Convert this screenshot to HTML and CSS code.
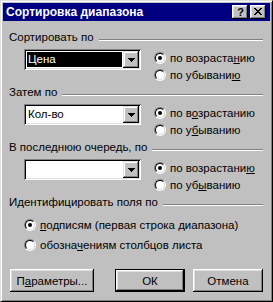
FILE: index.html
```html
<!DOCTYPE html>
<html lang="ru">
<head>
<meta charset="utf-8">
<title>Сортировка диапазона</title>
<link rel="stylesheet" href="styles.css">
</head>
<body>
<div class="window">
  <div class="titlebar">
    <span class="title">Сортировка диапазона</span>
    <span class="tbtn help">?</span>
    <span class="tbtn close"><svg width="8" height="7" viewBox="0 0 8 7"><path d="M0 0h2v1h1v1h2V1h1V0h2v1H7v1H6v1H5v1h1v1h1v1h1v1H6V6H5V5H3v1H2v1H0V6h1V5h1V4h1V3H2V2H1V1H0z" fill="#000"/></svg></span>
  </div>
  <div class="body">
    <div class="group">
      <div class="ghead"><span class="glabel">Сортировать по</span><span class="etch"></span></div>
      <div class="grow">
        <div class="combo">
          <div class="field"><span class="val sel">Цена</span></div>
          <div class="drop"><svg width="7" height="4" viewBox="0 0 7 4"><path d="M0 0h7v1H0zM1 1h5v1H1zM2 2h3v1H2zM3 3h1v1H3z" fill="#000"/></svg></div>
        </div>
        <div class="radios">
          <div class="radio"><span class="rb on"></span><span>по возраста<u>н</u>ию</span></div>
          <div class="radio"><span class="rb"></span><span>по убывани<u>ю</u></span></div>
        </div>
      </div>
    </div>
    <div class="group">
      <div class="ghead"><span class="glabel">Затем по</span><span class="etch"></span></div>
      <div class="grow">
        <div class="combo">
          <div class="field"><span class="val">Кол-во</span></div>
          <div class="drop"><svg width="7" height="4" viewBox="0 0 7 4"><path d="M0 0h7v1H0zM1 1h5v1H1zM2 2h3v1H2zM3 3h1v1H3z" fill="#000"/></svg></div>
        </div>
        <div class="radios">
          <div class="radio"><span class="rb on"></span><span>по в<u>о</u>зрастанию</span></div>
          <div class="radio"><span class="rb"></span><span>по у<u>б</u>ыванию</span></div>
        </div>
      </div>
    </div>
    <div class="group">
      <div class="ghead"><span class="glabel">В последнюю очередь, по</span><span class="etch"></span></div>
      <div class="grow">
        <div class="combo">
          <div class="field"><span class="val"></span></div>
          <div class="drop"><svg width="7" height="4" viewBox="0 0 7 4"><path d="M0 0h7v1H0zM1 1h5v1H1zM2 2h3v1H2zM3 3h1v1H3z" fill="#000"/></svg></div>
        </div>
        <div class="radios">
          <div class="radio"><span class="rb on"></span><span>по возрастани<u>ю</u></span></div>
          <div class="radio"><span class="rb"></span><span>по уб<u>ы</u>ванию</span></div>
        </div>
      </div>
    </div>
    <div class="ident">
      <div class="ghead"><span class="glabel">Идентифицировать поля по</span><span class="etch"></span></div>
      <div class="iradios">
        <div class="radio"><span class="rb on"></span><span><u>п</u>одписям (первая строка диапазона)</span></div>
        <div class="radio"><span class="rb"></span><span>обозна<u>ч</u>ениям столбцов листа</span></div>
      </div>
    </div>
    <div class="buttons">
      <div class="btn params">П<u>а</u>раметры...</div>
      <div class="btn ok">ОК</div>
      <div class="btn cancel">Отмена</div>
    </div>
  </div>
</div>
</body>
</html>
```
FILE: styles.css
```css
* { box-sizing: border-box; }
html, body { margin: 0; padding: 0; }
body {
  width: 273px;
  height: 302px;
  background: #c0c0c0;
  font-family: "Liberation Sans", Arial, sans-serif;
  font-size: 11.5px;
  color: #000;
  overflow: hidden;
}
.window {
  width: 273px;
  height: 302px;
  background: #c0c0c0;
  border: 1px solid;
  border-color: #dfdfdf #000 #000 #dfdfdf;
  box-shadow: inset 1px 1px #fff, inset -1px -1px #808080;
  padding: 2px;
  display: flex;
  flex-direction: column;
}
.titlebar {
  height: 18px;
  background: #000080;
  color: #fff;
  display: flex;
  align-items: center;
  padding: 0 4px 0 3px;
  flex: none;
}
.title {
  flex: 1;
  font-weight: bold;
  font-size: 12px;
  white-space: nowrap;
}
.tbtn {
  width: 16px;
  height: 14px;
  background: #c0c0c0;
  box-shadow: inset -1px -1px #000, inset 1px 1px #fff, inset -2px -2px #808080, inset 2px 2px #dfdfdf;
  color: #000;
  display: flex;
  align-items: center;
  justify-content: center;
  font-weight: bold;
  font-size: 11px;
  line-height: 14px;
  flex: none;
}
.help { margin-right: 2px; padding-left: 1px; }
.close svg { display: block; margin-top: -1px; }
.body {
  flex: 1;
  padding: 10px 7px 0 6px;
  display: flex;
  flex-direction: column;
}
.group { height: 55px; flex: none; }
.ghead {
  display: flex;
  height: 13px;
  line-height: 13px;
  white-space: nowrap;
}
.etch {
  flex: 1;
  margin-left: 5px;
  margin-top: 8px;
  height: 2px;
  border-top: 1px solid #808080;
  border-bottom: 1px solid #fff;
}
.grow {
  display: flex;
  margin-top: 5px;
  padding-left: 15px;
}
.combo {
  width: 117px;
  height: 21px;
  display: flex;
  background: #fff;
  padding: 2px;
  box-shadow: inset 1px 1px #808080, inset -1px -1px #fff, inset 2px 2px #000, inset -2px -2px #dfdfdf;
  flex: none;
}
.field {
  flex: 1;
  display: flex;
  padding: 1px;
}
.val {
  flex: 1;
  line-height: 15px;
  padding-left: 1px;
  white-space: nowrap;
}
.val.sel {
  background: #000;
  color: #fff;
}
.drop {
  width: 16px;
  height: 17px;
  background: #c0c0c0;
  box-shadow: inset -1px -1px #000, inset 1px 1px #dfdfdf, inset -2px -2px #808080, inset 2px 2px #fff;
  display: flex;
  align-items: center;
  justify-content: center;
  flex: none;
}
.drop svg { display: block; }
.radios {
  margin-left: 13px;
  display: flex;
  flex-direction: column;
}
.radio {
  display: flex;
  align-items: center;
  height: 17px;
  white-space: nowrap;
}
.rb {
  width: 12px;
  height: 12px;
  border-radius: 50%;
  border: 1px solid;
  border-color: #808080 #fff #fff #808080;
  margin-right: 4px;
  flex: none;
  position: relative;
}
.rb::before {
  content: "";
  position: absolute;
  inset: 0;
  border-radius: 50%;
  border: 1px solid;
  border-color: #000 #dfdfdf #dfdfdf #000;
  background: #fff;
}
.rb.on::after {
  content: "";
  position: absolute;
  left: 3px;
  top: 3px;
  width: 4px;
  height: 4px;
  border-radius: 50%;
  background: #000;
}
.ident { flex: none; }
.iradios {
  margin-top: 6px;
  padding-left: 15px;
  display: flex;
  flex-direction: column;
}
.iradios .radio { height: 20px; }
.buttons {
  display: flex;
  margin-top: 14px;
  padding-left: 1px;
}
.btn {
  width: 70px;
  height: 23px;
  background: #c0c0c0;
  box-shadow: inset -1px -1px #000, inset 1px 1px #fff, inset -2px -2px #808080, inset 2px 2px #dfdfdf;
  display: flex;
  align-items: center;
  justify-content: center;
  white-space: nowrap;
  flex: none;
}
.btn.params { width: 84px; }
.btn.ok {
  margin-left: 21px;
  border: 1px solid #000;
}
.btn.cancel { margin-left: 8px; }
```
